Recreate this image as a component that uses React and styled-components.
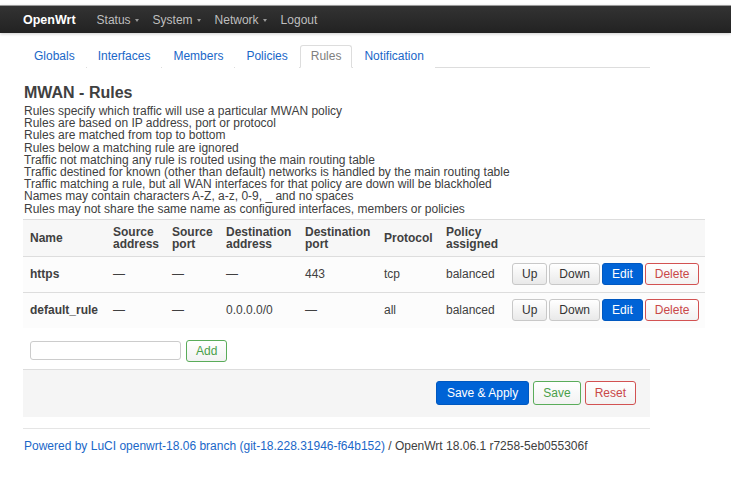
import React from 'react';
import styled, { createGlobalStyle } from 'styled-components';

const GlobalStyle = createGlobalStyle`
  body {
    margin: 0;
    background: #fff;
    font-family: "Liberation Sans", Arial, sans-serif;
    font-size: 12px;
    color: #404040;
  }
`;

const menu = ['Status', 'System', 'Network'];
const tabs = ['Globals', 'Interfaces', 'Members', 'Policies', 'Rules', 'Notification'];
const notes = [
  'Rules specify which traffic will use a particular MWAN policy',
  'Rules are based on IP address, port or protocol',
  'Rules are matched from top to bottom',
  'Rules below a matching rule are ignored',
  'Traffic not matching any rule is routed using the main routing table',
  'Traffic destined for known (other than default) networks is handled by the main routing table',
  'Traffic matching a rule, but all WAN interfaces for that policy are down will be blackholed',
  'Names may contain characters A-Z, a-z, 0-9, _ and no spaces',
  'Rules may not share the same name as configured interfaces, members or policies',
];
const heads = ['Name', 'Source address', 'Source port', 'Destination address', 'Destination port', 'Protocol', 'Policy assigned'];
const rules = [
  ['https', '—', '—', '—', '443', 'tcp', 'balanced'],
  ['default_rule', '—', '—', '0.0.0.0/0', '—', 'all', 'balanced'],
];

function App() {
  return (
    <>
      <GlobalStyle />
      <Page>
        <TopBar>
          <Brand>OpenWrt</Brand>
          {menu.map((m) => (
            <MenuItem key={m}>
              {m}
              <Caret />
            </MenuItem>
          ))}
          <MenuItem>Logout</MenuItem>
        </TopBar>
        <Main>
          <Tabs>
            {tabs.map((t) => (
              <Tab key={t} $active={t === 'Rules'}>{t}</Tab>
            ))}
          </Tabs>
          <Title>MWAN - Rules</Title>
          <Notes>
            {notes.map((n) => (
              <div key={n}>{n}</div>
            ))}
          </Notes>
          <Table>
            <HeadRow>
              {heads.map((h) => (
                <HeadCell key={h}>{h}</HeadCell>
              ))}
              <HeadCell />
            </HeadRow>
            {rules.map((r, i) => (
              <Row key={r[0]} $last={i === rules.length - 1}>
                {r.map((c, j) => (
                  <Cell key={j} $name={j === 0}>{c}</Cell>
                ))}
                <Cell>
                  <BtnGroup>
                    <Button>Up</Button>
                    <Button>Down</Button>
                    <Button $kind="primary">Edit</Button>
                    <Button $kind="negative">Delete</Button>
                  </BtnGroup>
                </Cell>
              </Row>
            ))}
          </Table>
          <AddRow>
            <TextInput type="text" />
            <Button $kind="positive">Add</Button>
          </AddRow>
          <Actions>
            <Button $kind="primary" $big>Save &amp; Apply</Button>
            <Button $kind="positive" $big>Save</Button>
            <Button $kind="negative" $big>Reset</Button>
          </Actions>
          <Footer>
            <FooterLink>Powered by LuCI openwrt-18.06 branch (git-18.228.31946-f64b152)</FooterLink>
            {' / OpenWrt 18.06.1 r7258-5eb055306f'}
          </Footer>
        </Main>
      </Page>
    </>
  );
}

export default App;

const Page = styled.div`
  padding-top: 5px;
  width: 731px;
`;

const TopBar = styled.div`
  height: 27px;
  border-top: 1px solid #9a9a9a;
  background: linear-gradient(#333, #222);
  display: flex;
  align-items: center;
  padding-left: 23px;
  box-shadow: 0 1px 3px rgba(0, 0, 0, 0.2);
`;

const Brand = styled.span`
  color: #fff;
  font-weight: bold;
  font-size: 12.5px;
  margin-right: 21px;
`;

const MenuItem = styled.span`
  color: #bfbfbf;
  font-size: 12px;
  display: flex;
  align-items: center;
  margin-right: 14px;
`;

const Caret = styled.span`
  margin-left: 4px;
  margin-top: 2px;
  border-left: 2.5px solid transparent;
  border-right: 2.5px solid transparent;
  border-top: 3px solid #999;
`;

const Main = styled.div`
  margin-left: 23px;
  width: 627px;
`;

const Tabs = styled.div`
  margin-top: 12px;
  display: flex;
  gap: 1px;
  border-bottom: 1px solid #ddd;
`;

const Tab = styled.span`
  height: 21px;
  line-height: 21px;
  padding: 0 10px;
  margin-bottom: -1px;
  font-size: 12px;
  color: ${(p) => (p.$active ? '#808080' : '#1a67c8')};
  border: 1px solid ${(p) => (p.$active ? '#ddd' : 'transparent')};
  border-bottom-color: ${(p) => (p.$active ? '#fff' : 'transparent')};
  border-radius: 3px 3px 0 0;
  background: #fff;
`;

const Title = styled.h2`
  margin: 16px 0 3px 1px;
  font-size: 16px;
  line-height: 18px;
  font-weight: bold;
  color: #404040;
`;

const Notes = styled.div`
  margin-left: 1px;
  font-size: 12px;
  line-height: 12.2px;
  color: #404040;
`;

const Table = styled.div`
  margin-top: 4px;
  width: 682px;
  border-top: 1px solid #ddd;
  background: #fcfcfc;
`;

const gridCols = '83px 59px 54px 79px 79px 62px 66px 1fr';

const HeadRow = styled.div`
  display: grid;
  grid-template-columns: ${gridCols};
  height: 36px;
  align-items: center;
  background: #f7f7f7;
  border-bottom: 1px solid #ddd;
`;

const HeadCell = styled.div`
  padding-left: 7px;
  font-weight: bold;
  line-height: 12px;
  color: #404040;
`;

const Row = styled.div`
  display: grid;
  grid-template-columns: ${gridCols};
  height: 35px;
  align-items: center;
  border-bottom: ${(p) => (p.$last ? 'none' : '1px solid #ddd')};
`;

const Cell = styled.div`
  padding-left: 7px;
  font-weight: ${(p) => (p.$name ? 'bold' : 'normal')};
  color: #404040;
`;

const BtnGroup = styled.div`
  display: flex;
  gap: 2px;
`;

const kinds = {
  default: { bg: 'linear-gradient(#fff, #e9e9e9)', border: '#c8c8c8', color: '#333' },
  primary: { bg: '#0063d6', border: '#0058c0', color: '#fff' },
  positive: { bg: 'linear-gradient(#fff, #f2f2f2)', border: '#5aac5a', color: '#4a9f4a' },
  negative: { bg: 'linear-gradient(#fff, #f2f2f2)', border: '#d25252', color: '#c94848' },
};

const Button = styled.button`
  font-family: "Liberation Sans", Arial, sans-serif;
  font-size: 12px;
  height: ${(p) => (p.$big ? '24px' : '22px')};
  padding: 0 ${(p) => (p.$big && p.$kind === 'primary' ? '10px' : '9px')};
  border-radius: 3px;
  border: 1px solid ${(p) => kinds[p.$kind || 'default'].border};
  background: ${(p) => kinds[p.$kind || 'default'].bg};
  color: ${(p) => kinds[p.$kind || 'default'].color};
  line-height: 1;
  cursor: pointer;
`;

const AddRow = styled.div`
  display: flex;
  align-items: center;
  gap: 5px;
  padding-left: 7px;
  margin-top: 12px;
`;

const TextInput = styled.input`
  width: 151px;
  height: 19px;
  box-sizing: border-box;
  border: 1px solid #ccc;
  border-radius: 3px;
  padding: 0 4px;
`;

const Actions = styled.div`
  margin-top: 7px;
  height: 47px;
  background: #f5f5f5;
  border-top: 1px solid #ddd;
  display: flex;
  align-items: center;
  justify-content: flex-end;
  gap: 4px;
  padding-right: 14px;
`;

const Footer = styled.div`
  margin-top: 11px;
  border-top: 1px solid #e5e5e5;
  padding-top: 10px;
  font-size: 12px;
  color: #404040;
  padding-left: 1px;
`;

const FooterLink = styled.a`
  color: #1a67c8;
  text-decoration: none;
`;
